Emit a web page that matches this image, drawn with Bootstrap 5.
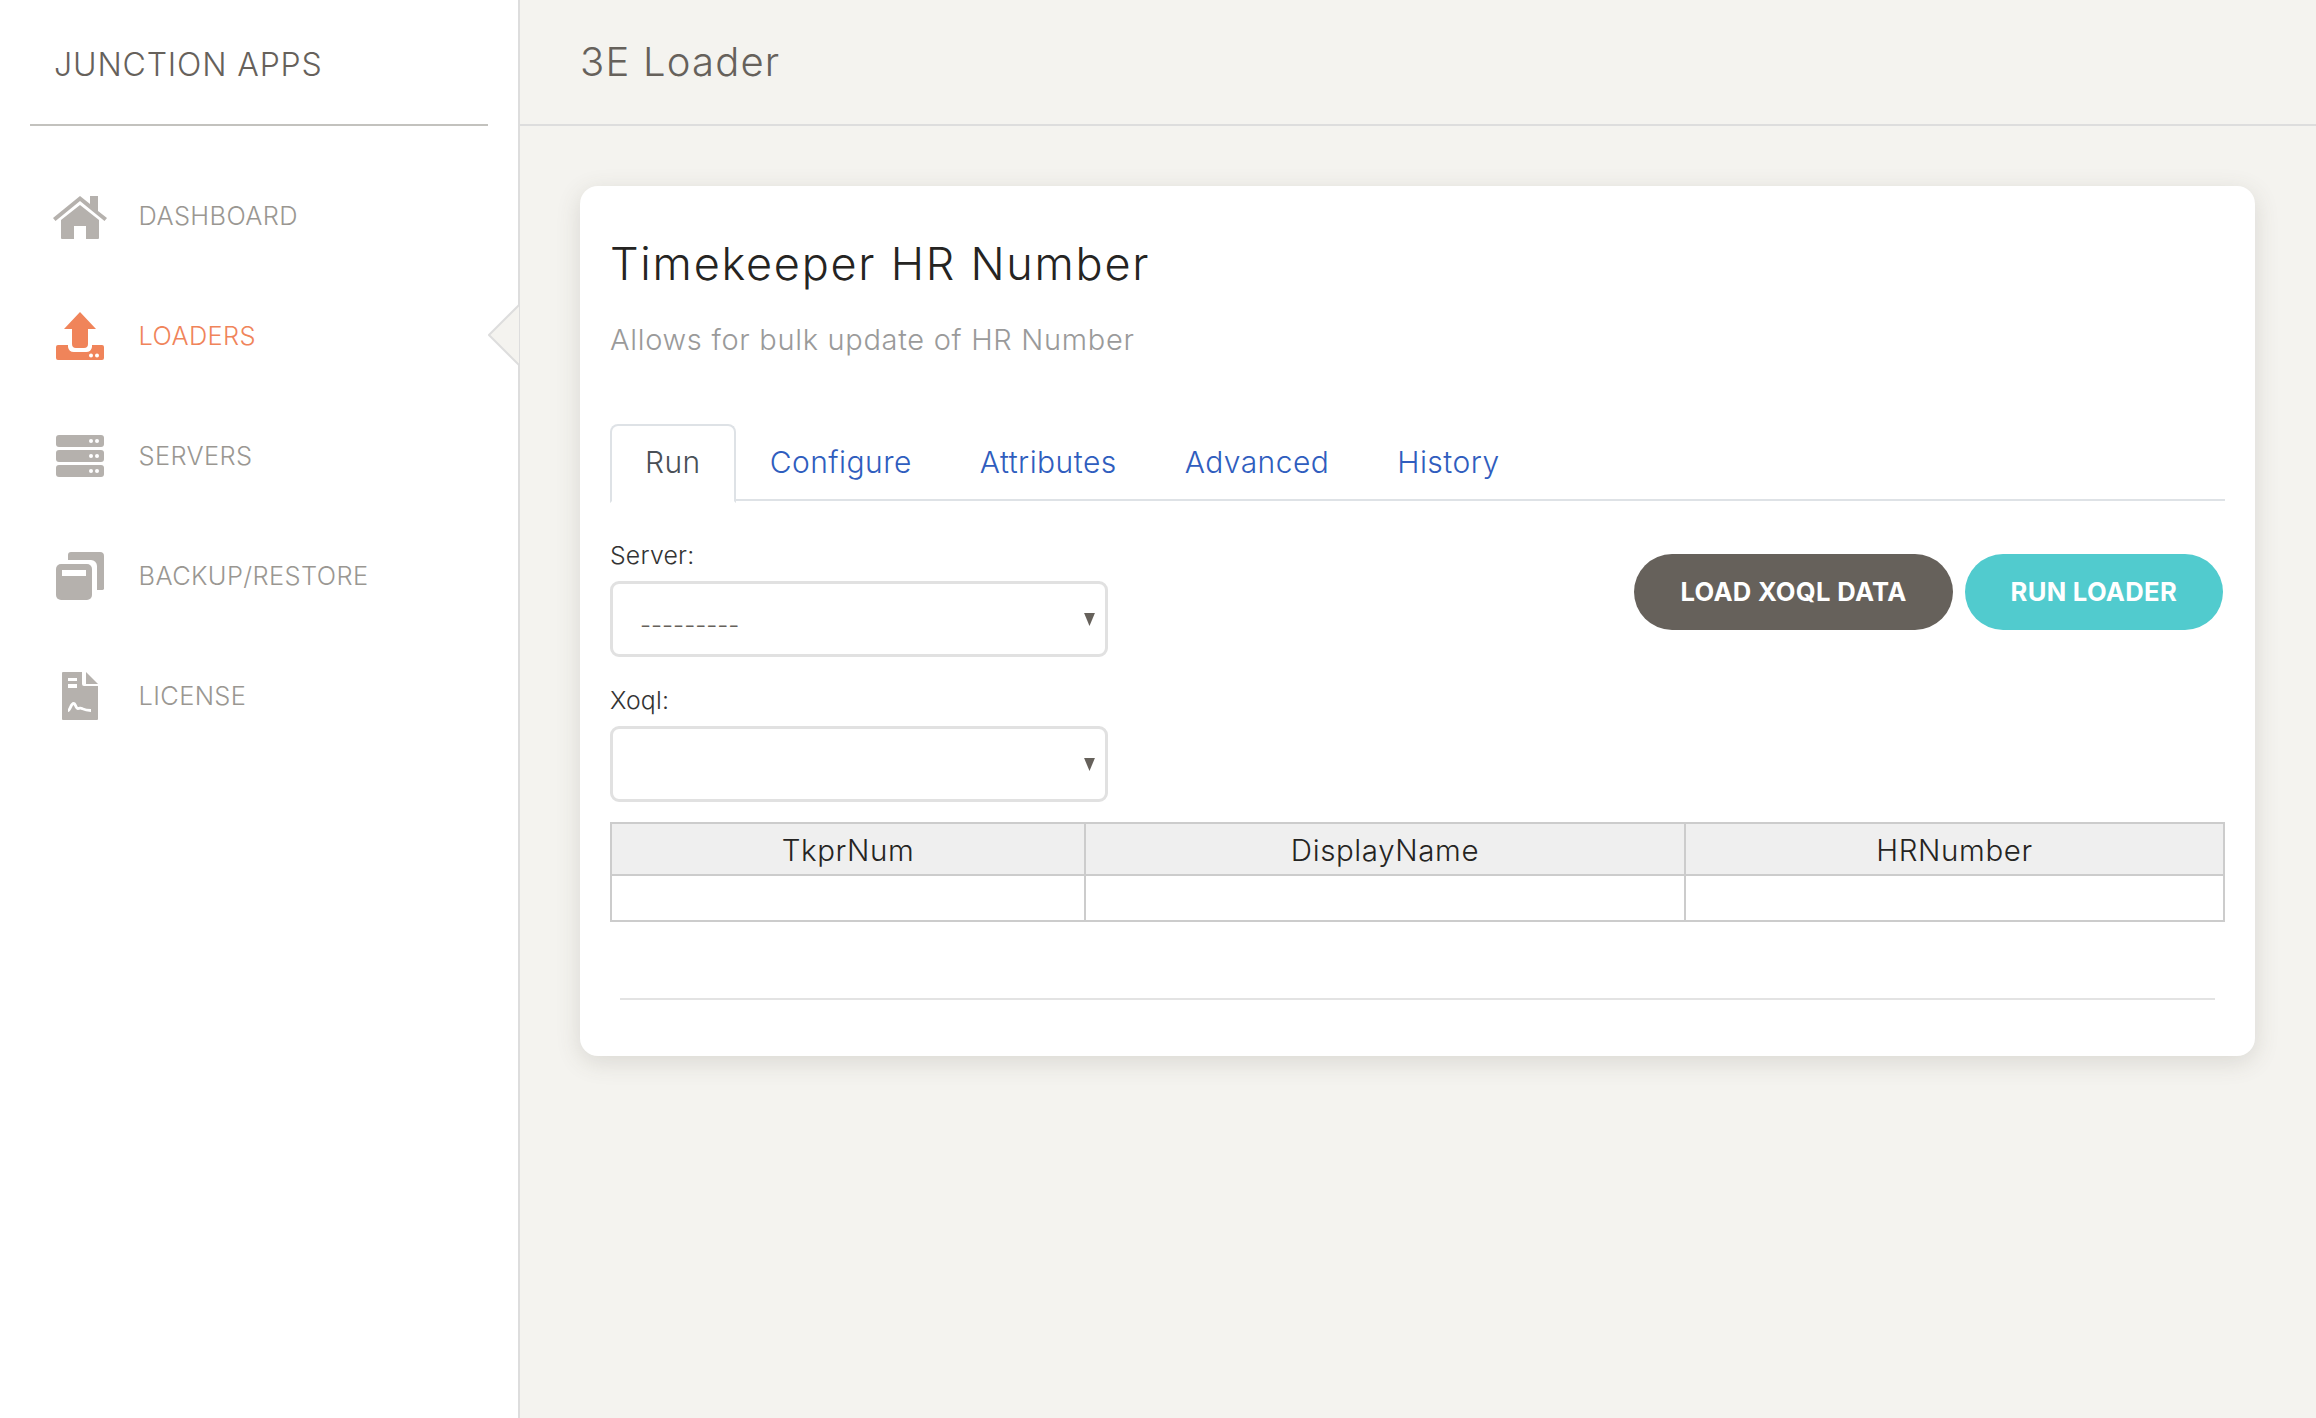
<!doctype html>
<html lang="en">
<head>
<meta charset="utf-8">
<title>3E Loader</title>
<link href="https://cdn.jsdelivr.net/npm/bootstrap@5.3.0/dist/css/bootstrap.min.css" rel="stylesheet">
<style>
html,body{height:100%}
body{font-family:"Inter","Liberation Sans",sans-serif;font-weight:300;background:#f4f3ef;color:#252422;overflow:hidden}
.shell{min-height:1418px}
.side{width:520px;flex:none;background:#fff;border-right:2px solid #dddddd;position:relative}
.brand{height:126px;margin:0 30px;padding-left:24px;border-bottom:2px solid #c3c2be;color:#66615b;font-size:32px;letter-spacing:.85px;line-height:1;display:flex;align-items:center}
.brand span{position:relative;top:3px}
.menu{padding-top:30px}
.menu-row{height:120px;padding-left:53px;display:flex;align-items:center;color:#9a9792;font-size:25.4px;letter-spacing:.4px;text-decoration:none}
.menu-row.now{color:#f0845a}
.ico{width:54px;height:50px;flex:none;margin-right:31.500px;fill:#b5b1ad}
.now .ico{fill:#f0845a}
.notch{position:absolute;right:-2px;top:304px;width:32px;height:62px}
.main{flex:1;min-width:0}
.topbar{height:126px;padding-left:60px;border-bottom:2px solid #dddddd;display:flex;align-items:center;color:#66615b;font-size:40px;letter-spacing:1.2px}
.pane{padding:60px 61px 0 60px}
.sheet{height:870px;background:#fff;border-radius:18px;box-shadow:0 6px 24px rgba(80,75,65,.16);padding:30px;border:0}
.sheet-title{font-size:45px;font-weight:300;color:#252422;letter-spacing:1.75px;margin:20px 0 0;line-height:56px}
.sheet-sub{font-size:29px;color:#9a9a9a;letter-spacing:.7px;margin:29px 0 0;line-height:38px}
.tabbar{margin-top:65px;border-bottom:2px solid #dee2e6;height:77px;gap:0}
.tabbar .nav-link{height:77px;font-size:30px;padding:19px 32px;color:#2f5dbe;border:2px solid transparent;border-radius:8px 8px 0 0;letter-spacing:.45px;line-height:34px;margin:0}
.tabbar .nav-link.active{color:#495057;background:#fff;border-color:#dee2e6 #dee2e6 #fff;margin-bottom:-2px;height:79px;padding:19px 33px}
.fields{width:498px}
.fld-label{font-size:24.8px;line-height:30px;color:#333;margin:39px 0 11px;display:block;letter-spacing:.2px}
.fields .pick + .fld-label{margin-top:28px}
.pick{height:76px;width:498px;border:3px solid #e1e1e1;border-radius:9px;padding:12px 40px 0 27px;font-size:24.4px;font-weight:300;color:#66615b;font-family:inherit;letter-spacing:0;box-shadow:none;background-position:right 9px center;background-size:13px 13px;background-image:url("data:image/svg+xml,%3csvg xmlns='http://www.w3.org/2000/svg' viewBox='0 0 12 12'%3e%3cpath fill='%2366615b' d='M1 0h10L6 12z'/%3e%3c/svg%3e")}
.cta{height:76px;border-radius:38px;border:0;color:#fff;font-weight:700;font-size:25.6px;letter-spacing:.3px;padding:0 46px;display:flex;align-items:center}
.cta-dark{background:#66615b}
.cta-dark:hover{background:#66615b;color:#fff}
.cta-teal{background:#51cbce}
.cta-teal:hover{background:#51cbce;color:#fff}
.cta-wrap{gap:12px;padding-top:53px;padding-right:2px}
.grid-tb{margin:20px 0 0;width:1615px;table-layout:fixed;--bs-table-border-color:#cccccc;border-color:#ccc}
.grid-tb>:not(caption)>*>*{border-width:2px;border-color:#ccc;padding:0;text-align:center;font-weight:300;font-size:29.5px;color:#252422;letter-spacing:.6px;box-shadow:none}
.grid-tb thead th{height:52px;background:#efefef;line-height:48px}
.grid-tb tbody td{height:46px}
.c1{width:474px}.c2{width:600px}
.sheet>.rule{margin:76px 10px 0;border:0;border-top:2px solid #e3e3e3;opacity:1}
</style>
</head>
<body>
<div class="shell d-flex">
  <aside class="side">
    <div class="brand"><span>JUNCTION APPS</span></div>
    <nav class="menu">
      <a class="menu-row" href="#"><svg class="ico" viewBox="0 0 54 50"><path d="M0 27 27 5l10 8V5h8v15l9 7-2.500 3L27 10 2.500 30z"/><path d="M8 29 27 14l19 15v18a1 1 0 0 1-1 1H33V35H21v13H9a1 1 0 0 1-1-1z"/></svg><span>DASHBOARD</span></a>
      <a class="menu-row now" href="#"><svg class="ico" viewBox="0 0 54 50"><path d="M27 1 43 18H35V33a4 4 0 0 1-4 4H23a4 4 0 0 1-4-4V18H11z"/><path d="M3 36a2 2 0 0 1 2-2H15v2a6 6 0 0 0 6 5H33a6 6 0 0 0 6-5V34h10a2 2 0 0 1 2 2V47a2 2 0 0 1-2 2H5a2 2 0 0 1-2-2z"/><circle cx="38" cy="44.500" r="2" fill="#fff"/><circle cx="44" cy="44.500" r="2" fill="#fff"/></svg><span>LOADERS</span></a>
      <a class="menu-row" href="#"><svg class="ico" viewBox="0 0 54 50"><rect x="3" y="4" width="48" height="12" rx="3"/><rect x="3" y="19" width="48" height="12" rx="3"/><rect x="3" y="34" width="48" height="12" rx="3"/><g fill="#fff"><circle cx="38" cy="10" r="2"/><circle cx="44" cy="10" r="2"/><circle cx="38" cy="25" r="2"/><circle cx="44" cy="25" r="2"/><circle cx="38" cy="40" r="2"/><circle cx="44" cy="40" r="2"/></g></svg><span>SERVERS</span></a>
      <a class="menu-row" href="#"><svg class="ico" viewBox="0 0 54 50"><path d="M18 1h29a4 4 0 0 1 4 4v33a2 2 0 0 1-2 1h-5V15a6 6 0 0 0-6-6H15V4a3 3 0 0 1 3-3z"/><rect x="3" y="13" width="36" height="36" rx="5"/><rect x="9" y="19" width="24" height="6" fill="#fff"/></svg><span>BACKUP/RESTORE</span></a>
      <a class="menu-row" href="#"><svg class="ico" viewBox="0 0 54 50"><path d="M9 2a1 1 0 0 1 1-1H29V13a2 2 0 0 0 2 2H45V48a1 1 0 0 1-1 1H10a1 1 0 0 1-1-1z"/><path d="M33 1 45 13H33z"/><rect x="15" y="7" width="9" height="3" fill="#fff"/><rect x="15" y="13" width="9" height="4" fill="#fff"/><path d="M15 39.500c2 0 3-7 5.500-7s2 5 4.500 5 2-1 4 0 3 2 9 2" fill="none" stroke="#fff" stroke-width="2.800"/></svg><span>LICENSE</span></a>
    </nav>
    <svg class="notch" viewBox="0 0 32 62"><path d="M32 0 1 31l31 31z" fill="#f4f3ef" stroke="#dddddd" stroke-width="2"/></svg>
  </aside>
  <main class="main">
    <header class="topbar"><span>3E Loader</span></header>
    <div class="pane">
      <section class="card sheet">
        <h2 class="sheet-title">Timekeeper HR Number</h2>
        <p class="sheet-sub">Allows for bulk update of HR Number</p>
        <ul class="nav nav-tabs tabbar">
          <li class="nav-item"><a class="nav-link active" href="#">Run</a></li>
          <li class="nav-item"><a class="nav-link" href="#">Configure</a></li>
          <li class="nav-item"><a class="nav-link" href="#">Attributes</a></li>
          <li class="nav-item"><a class="nav-link" href="#">Advanced</a></li>
          <li class="nav-item"><a class="nav-link" href="#">History</a></li>
        </ul>
        <div class="d-flex justify-content-between align-items-start">
          <div class="fields">
            <label class="fld-label">Server:</label>
            <select class="form-select pick"><option>---------</option></select>
            <label class="fld-label">Xoql:</label>
            <select class="form-select pick"><option></option></select>
          </div>
          <div class="d-flex cta-wrap">
            <button class="btn cta cta-dark" type="button">LOAD XOQL DATA</button>
            <button class="btn cta cta-teal" type="button">RUN LOADER</button>
          </div>
        </div>
        <table class="table table-bordered grid-tb">
          <colgroup><col class="c1"><col class="c2"><col></colgroup>
          <thead><tr><th>TkprNum</th><th>DisplayName</th><th>HRNumber</th></tr></thead>
          <tbody><tr><td></td><td></td><td></td></tr></tbody>
        </table>
        <hr class="rule">
      </section>
    </div>
  </main>
</div>
<script src="https://cdn.jsdelivr.net/npm/bootstrap@5.3.0/dist/js/bootstrap.bundle.min.js"></script>
</body>
</html>
